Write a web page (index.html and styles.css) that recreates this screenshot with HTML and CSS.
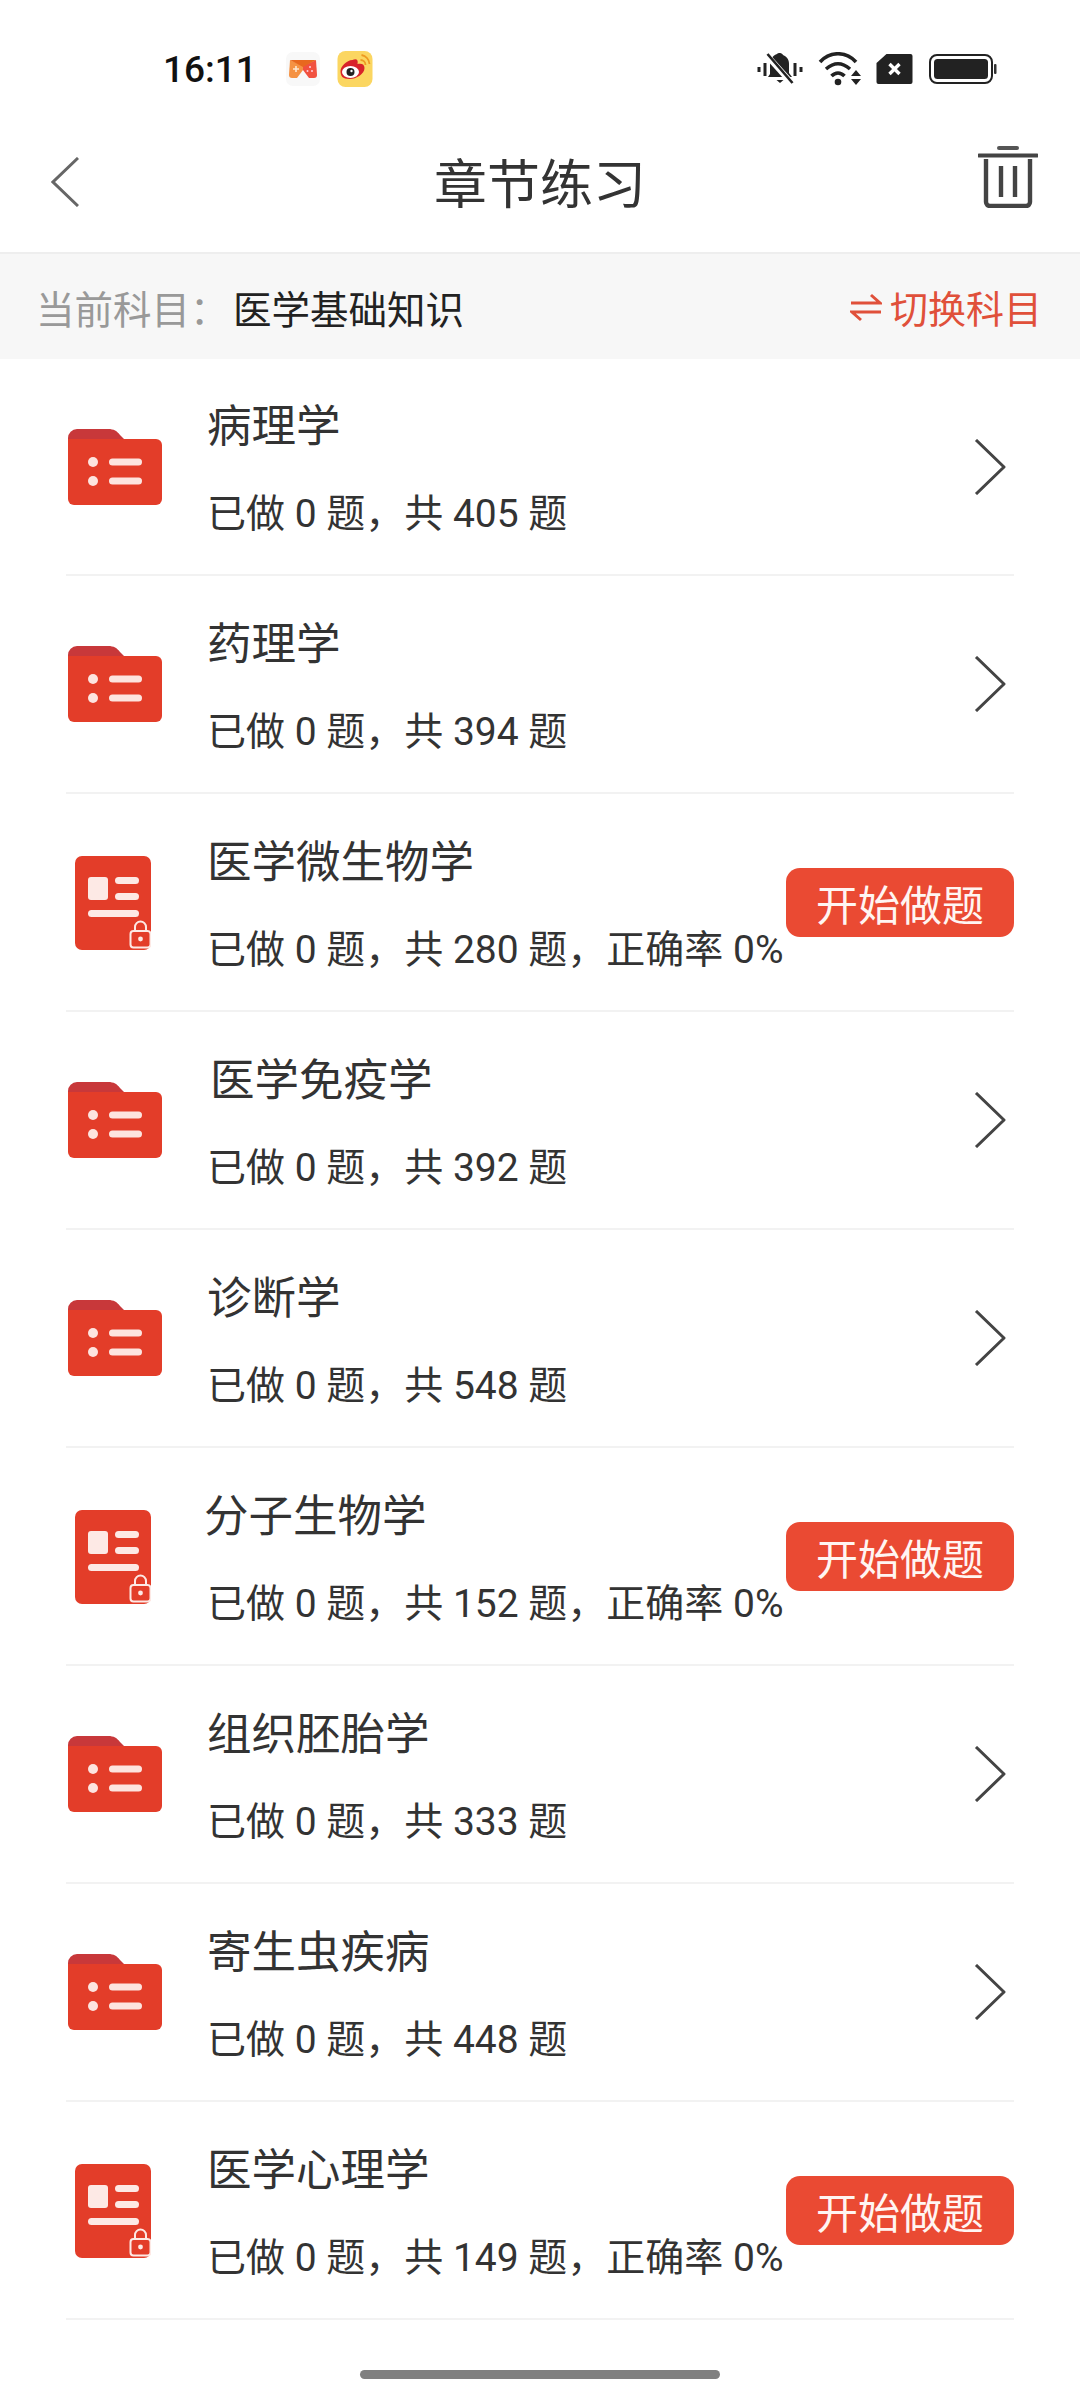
FILE: index.html
```html
<!DOCTYPE html>
<html lang="zh-CN">

<head>
    <meta charset="utf-8">
    <title>章节练习</title>
    <link rel="stylesheet" href="styles.css">
</head>

<body>
    <svg class="defs" width="0" height="0">
        <symbol id="icon-folder" viewBox="0 0 94 76">
            <path d="M0 9a9 9 0 0 1 9-9h31c6 0 9 2 12 6l4 4H0z" fill="#c8383a"/>
            <path d="M0 10h88a6 6 0 0 1 6 6v54a6 6 0 0 1-6 6H6a6 6 0 0 1-6-6z" fill="#e33d29"/>
            <circle cx="25" cy="33" r="5" fill="#fde4df"/>
            <circle cx="25" cy="52" r="5" fill="#fde4df"/>
            <rect x="41" y="29.500" width="33" height="7" rx="3.500" fill="#fde4df"/>
            <rect x="41" y="48.500" width="33" height="7" rx="3.500" fill="#fde4df"/>
        </symbol>
        <symbol id="icon-doc" viewBox="0 0 76 94">
            <rect x="0" y="0" width="76" height="94" rx="7" fill="#e33d29"/>
            <rect x="13" y="21" width="20" height="23" rx="3" fill="#fde9e5"/>
            <rect x="40" y="21" width="24" height="7" rx="3.500" fill="#fde9e5"/>
            <rect x="40" y="37" width="24" height="7" rx="3.500" fill="#fde9e5"/>
            <rect x="13" y="54" width="51" height="7" rx="3.500" fill="#fde9e5"/>
            <path d="M60 75v-4a5.500 5.500 0 0 1 11 0v4" fill="none" stroke="#fde9e5" stroke-width="2"/>
            <rect x="55.500" y="75" width="20" height="16.500" rx="3" fill="#e33d29" stroke="#fde9e5" stroke-width="2"/>
            <circle cx="65.500" cy="83" r="2.400" fill="#fde9e5"/>
        </symbol>
        <symbol id="icon-chevron" viewBox="0 0 32 56">
            <path d="M2 1l28 27L2 55" fill="none" stroke="#444" stroke-width="3" stroke-linejoin="round"/>
        </symbol>
    </svg>

    <div class="status-bar">
        <div class="status-left">
            <span class="clock">16:11</span>
            <svg class="app-icon" viewBox="0 0 34 34">
                <rect width="34" height="34" rx="7" fill="#f8f8f8"/>
                <path d="M4 8l13 6v4l-6 8H6q-3 0-3-3z" fill="#f59243"/>
                <path d="M30 8l-13 6v4l6 8h5q3 0 3-3z" fill="#f1513f"/>
                <path d="M4 8h26L17 15z" fill="#e8681e"/>
                <path d="M7 17h6M10 14v6" stroke="#fde6d0" stroke-width="1.600"/>
                <circle cx="24" cy="15" r="1" fill="#fcd"/>
                <circle cx="21.500" cy="19" r="1" fill="#fcd"/>
                <circle cx="26" cy="19" r="1" fill="#fcd"/>
            </svg>
            <svg class="app-icon app-weibo" viewBox="0 0 35 36">
                <rect width="35" height="36" rx="8" fill="#fbd661"/>
                <path d="M15 9c4-2 6 0 5 4 4-1 7 0 7 4 0 6-8 11-15 11S3 25 3 20c0-4 6-11 12-11z" fill="#d8232a"/>
                <ellipse cx="13" cy="21" rx="8.500" ry="6" fill="#fff"/>
                <circle cx="13" cy="21" r="4" fill="#222"/>
                <circle cx="14" cy="20" r="1.200" fill="#fff"/>
                <path d="M23 9a5 5 0 0 1 5 5M24 4a10 10 0 0 1 8 9" fill="none" stroke="#ee9a22" stroke-width="1.800"/>
            </svg>
        </div>
        <div class="status-right">
            <svg class="status-bell" viewBox="0 0 47 34">
                <path d="M1 15h3v5H1zM7 11h3v13H7zM37 11h3v13h-3zM43 15h3v5h-3z" fill="#222"/>
                <path d="M23.500 1c1.500 0 2.500 1 3 2 4 1.500 6 5 6 9v9l3 4H11.500l2-3v-10c0-4 2-8 7-10 .5-.6 1.500-1 3-1z" fill="#222"/>
                <path d="M20 28h7l-3.500 3z" fill="#222"/>
                <path d="M9 2l27 30" stroke="#fff" stroke-width="6"/>
                <path d="M11 2l25 29" stroke="#222" stroke-width="2.600"/>
            </svg>
            <svg class="status-wifi" viewBox="0 0 44 34">
                <path d="M2 10C12-1 28-1 38 10M8 17c8-7 16-7 24 0M13.500 24c4-4 9-4 13 0" fill="none" stroke="#222" stroke-width="3.600"/>
                <circle cx="20" cy="30" r="3.300" fill="#222"/>
                <path d="M33 24l5-6 5 6zM33 27l5 6 5-6z" fill="#222"/>
            </svg>
            <svg class="status-sim" viewBox="0 0 36 30">
                <path d="M10 0h24a2 2 0 0 1 2 2v26a2 2 0 0 1-2 2H2a2 2 0 0 1-2-2V9z" fill="#222"/>
                <path d="M13 10l10 10M23 10L13 20" stroke="#fff" stroke-width="3.400"/>
            </svg>
            <svg class="status-battery" viewBox="0 0 68 30">
                <rect x="1" y="1" width="62" height="28" rx="7" fill="none" stroke="#222" stroke-width="2"/>
                <rect x="5" y="5" width="54" height="20" rx="3.500" fill="#222"/>
                <rect x="65" y="10" width="2.500" height="10" rx="1" fill="#333"/>
            </svg>
        </div>
    </div>

    <header class="nav-bar">
        <svg class="nav-back" viewBox="0 0 28 50">
            <path d="M27 1L2 25l25 24" fill="none" stroke="#666" stroke-width="3"/>
        </svg>
        <h1 class="nav-title">章节练习</h1>
        <svg class="nav-trash" viewBox="0 0 60 62">
            <path d="M21 2h18" stroke="#555" stroke-width="4" stroke-linecap="round"/>
            <path d="M1 9.500h58" stroke="#444" stroke-width="4" stroke-linecap="round"/>
            <path d="M8 13v43a4 4 0 0 0 4 4h36a4 4 0 0 0 4-4V13" fill="none" stroke="#444" stroke-width="4.400"/>
            <path d="M23 20v31M37 20v31" stroke="#444" stroke-width="4.400"/>
        </svg>
    </header>

    <div class="subject-bar">
        <div class="subject-info">
            <span class="subject-label">当前科目：</span>
            <span class="subject-name">医学基础知识</span>
        </div>
        <div class="subject-switch">
            <svg class="switch-icon" viewBox="0 0 32 32">
                <path d="M1 12h29L21 4" fill="none" stroke="#e0503a" stroke-width="3"/>
                <path d="M31 21H2l9 8" fill="none" stroke="#e0503a" stroke-width="3"/>
            </svg>
            <span>切换科目</span>
        </div>
    </div>

    <main class="chapter-list">
        <div class="chapter-row">
            <div class="chapter-icon"><svg class="folder"><use href="#icon-folder"/></svg></div>
            <div class="chapter-text">
                <div class="chapter-name">病理学</div>
                <div class="chapter-stat">已做 0 题，共 405 题</div>
            </div>
            <svg class="chevron"><use href="#icon-chevron"/></svg>
        </div>
        <div class="chapter-row">
            <div class="chapter-icon"><svg class="folder"><use href="#icon-folder"/></svg></div>
            <div class="chapter-text">
                <div class="chapter-name">药理学</div>
                <div class="chapter-stat">已做 0 题，共 394 题</div>
            </div>
            <svg class="chevron"><use href="#icon-chevron"/></svg>
        </div>
        <div class="chapter-row">
            <div class="chapter-icon"><svg class="doc"><use href="#icon-doc"/></svg></div>
            <div class="chapter-text">
                <div class="chapter-name">医学微生物学</div>
                <div class="chapter-stat">已做 0 题，共 280 题，正确率 0%</div>
            </div>
            <button class="start-btn" type="button">开始做题</button>
        </div>
        <div class="chapter-row">
            <div class="chapter-icon"><svg class="folder"><use href="#icon-folder"/></svg></div>
            <div class="chapter-text">
                <div class="chapter-name shift-right">医学免疫学</div>
                <div class="chapter-stat">已做 0 题，共 392 题</div>
            </div>
            <svg class="chevron"><use href="#icon-chevron"/></svg>
        </div>
        <div class="chapter-row">
            <div class="chapter-icon"><svg class="folder"><use href="#icon-folder"/></svg></div>
            <div class="chapter-text">
                <div class="chapter-name">诊断学</div>
                <div class="chapter-stat">已做 0 题，共 548 题</div>
            </div>
            <svg class="chevron"><use href="#icon-chevron"/></svg>
        </div>
        <div class="chapter-row">
            <div class="chapter-icon"><svg class="doc"><use href="#icon-doc"/></svg></div>
            <div class="chapter-text">
                <div class="chapter-name shift-left">分子生物学</div>
                <div class="chapter-stat">已做 0 题，共 152 题，正确率 0%</div>
            </div>
            <button class="start-btn" type="button">开始做题</button>
        </div>
        <div class="chapter-row">
            <div class="chapter-icon"><svg class="folder"><use href="#icon-folder"/></svg></div>
            <div class="chapter-text">
                <div class="chapter-name">组织胚胎学</div>
                <div class="chapter-stat">已做 0 题，共 333 题</div>
            </div>
            <svg class="chevron"><use href="#icon-chevron"/></svg>
        </div>
        <div class="chapter-row">
            <div class="chapter-icon"><svg class="folder"><use href="#icon-folder"/></svg></div>
            <div class="chapter-text">
                <div class="chapter-name">寄生虫疾病</div>
                <div class="chapter-stat">已做 0 题，共 448 题</div>
            </div>
            <svg class="chevron"><use href="#icon-chevron"/></svg>
        </div>
        <div class="chapter-row">
            <div class="chapter-icon"><svg class="doc"><use href="#icon-doc"/></svg></div>
            <div class="chapter-text">
                <div class="chapter-name">医学心理学</div>
                <div class="chapter-stat">已做 0 题，共 149 题，正确率 0%</div>
            </div>
            <button class="start-btn" type="button">开始做题</button>
        </div>
    </main>

    <div class="home-bar"></div>
</body>

</html>
```

FILE: styles.css
```css
body {
    margin: 0;
    width: 1080px;
    height: 2400px;
    overflow: hidden;
    background-color: #ffffff;
    color: #333333;
    font-family: Roboto, "Noto Sans CJK SC", sans-serif;
}

.defs {
    display: block;
    height: 0;
}

.status-bar {
    height: 94px;
    padding: 22px 83px 0 163px;
    display: flex;
    justify-content: space-between;
    align-items: center;
}

.status-left {
    display: flex;
    align-items: center;
}

.clock {
    width: 123px;
    font-size: 37px;
    font-weight: 500;
    color: #111111;
}

.app-icon {
    width: 34px;
    height: 34px;
}

.app-weibo {
    width: 36px;
    height: 36px;
    margin-left: 17px;
}

.status-right {
    display: flex;
    align-items: center;
}

.status-bell {
    width: 48px;
    height: 34px;
    margin-right: 14px;
}

.status-wifi {
    width: 44px;
    height: 34px;
    margin-right: 14px;
}

.status-sim {
    width: 37px;
    height: 30px;
    margin-right: 16px;
}

.status-battery {
    width: 68px;
    height: 30px;
}

.nav-bar {
    height: 136px;
    padding: 0 42px 0 51px;
    display: grid;
    grid-template-columns: 1fr auto 1fr;
    align-items: center;
    border-bottom: 2px solid #eeeeee;
}

.nav-back {
    width: 28px;
    height: 50px;
    margin-top: -4px;
}

.nav-title {
    margin: -6px 9px 0 0;
    font-size: 53px;
    font-weight: 400;
    color: #333333;
}

.nav-trash {
    width: 60px;
    height: 62px;
    margin-top: -14px;
    justify-self: end;
}

.subject-bar {
    height: 105px;
    padding: 0 38px 0 36px;
    display: flex;
    justify-content: space-between;
    align-items: center;
    background-color: #f7f7f7;
}

.subject-info {
    display: flex;
    align-items: center;
    font-size: 38.500px;
}

.subject-label {
    width: 197px;
    color: #999999;
}

.subject-name {
    color: #222222;
}

.subject-switch {
    display: flex;
    align-items: center;
    gap: 8px;
    font-size: 38px;
    color: #e0503a;
}

.switch-icon {
    width: 32px;
    height: 32px;
}

.chapter-list {
    margin: 0 66px;
}

.chapter-row {
    box-sizing: border-box;
    height: 218px;
    display: flex;
    align-items: center;
    border-bottom: 2px solid #f2f2f2;
}

.chapter-row:first-child {
    height: 217px;
}

.chapter-icon {
    width: 141px;
    padding-left: 2px;
    box-sizing: border-box;
    flex-shrink: 0;
    display: flex;
}

.folder {
    width: 94px;
    height: 76px;
}

.doc {
    width: 76px;
    height: 94px;
    margin: 1px 0 0 7px;
}

.chapter-text {
    flex: 1;
    min-width: 0;
}

.chapter-name {
    font-size: 44.500px;
    line-height: 60px;
    margin-top: 4px;
    color: #333333;
}

.shift-right {
    margin-left: 3px;
}

.shift-left {
    margin-left: -3px;
}

.chapter-stat {
    margin-top: 31px;
    font-size: 39px;
    line-height: 52px;
    color: #333333;
    white-space: nowrap;
}

.chevron {
    width: 32px;
    height: 56px;
    margin-right: 8px;
    flex-shrink: 0;
}

.start-btn {
    width: 228px;
    height: 69px;
    padding: 0;
    flex-shrink: 0;
    border: none;
    border-radius: 14px;
    background-color: #ea4a33;
    color: #fff5f2;
    font-family: inherit;
    font-size: 42px;
}

.home-bar {
    width: 360px;
    height: 9px;
    margin: 50px auto 0;
    border-radius: 5px;
    background-color: #808080;
}
```
